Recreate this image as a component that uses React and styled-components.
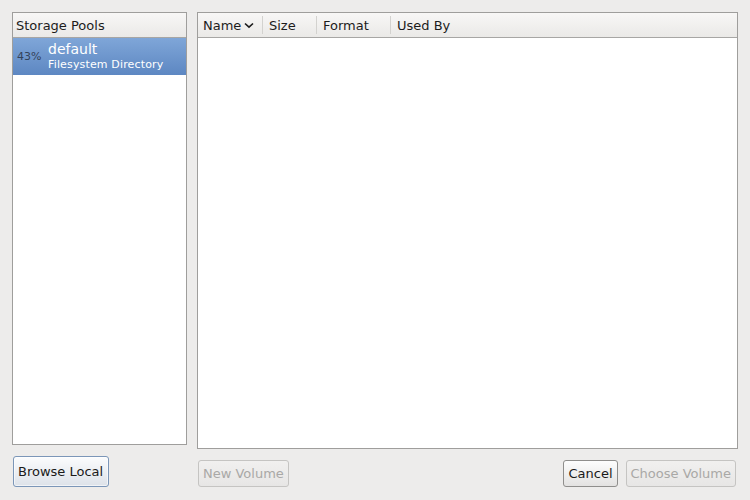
import React from "react";
import styled, { createGlobalStyle } from "styled-components";

const Global = createGlobalStyle`
  html, body { margin: 0; padding: 0; background: #edeceb; }
  body { font-family: "DejaVu Sans", "Liberation Sans", sans-serif; font-size: 13px; color: #1a1a1a; }
`;

const Window = styled.div`
  width: 750px;
  height: 500px;
  box-sizing: border-box;
  padding: 12px 12px 13px 12px;
  display: flex;
  gap: 10px;
  background: #edeceb;
`;

const Column = styled.div`
  display: flex;
  flex-direction: column;
  width: ${(p) => (p.$width ? p.$width + "px" : "auto")};
  flex: ${(p) => (p.$width ? "0 0 auto" : "1 1 auto")};
  min-width: 0;
`;

const Panel = styled.div`
  flex: 1 1 auto;
  background: #ffffff;
  border: 1px solid #9f9e9c;
  display: flex;
  flex-direction: column;
  min-height: 0;
`;

const Header = styled.div`
  height: 24px;
  border-bottom: 1px solid #a7a6a4;
  background: linear-gradient(#f8f7f6, #eae9e7);
  display: flex;
  align-items: center;
`;

const HeaderCell = styled.div`
  position: relative;
  width: ${(p) => (p.$width ? p.$width + "px" : "auto")};
  flex: ${(p) => (p.$width ? "0 0 auto" : "1 1 auto")};
  height: 100%;
  box-sizing: border-box;
  padding-left: ${(p) => p.$pad ?? 5}px;
  display: flex;
  align-items: center;
  gap: 3px;
  font-size: 13px;
  color: #1c1c1c;
  border-right: ${(p) => (p.$sep ? "1px solid transparent" : "none")};
  &::after {
    content: "";
    display: ${(p) => (p.$sep ? "block" : "none")};
    position: absolute;
    right: -1px;
    top: 3px;
    bottom: 3px;
    width: 1px;
    background: #d3d2cf;
  }
`;

const PoolRow = styled.div`
  height: 37px;
  display: flex;
  align-items: center;
  background: ${(p) => (p.$selected ? "linear-gradient(#7fa6d8, #5d87c2)" : "transparent")};
  color: ${(p) => (p.$selected ? "#ffffff" : "#1a1a1a")};
`;

const Percent = styled.div`
  width: 35px;
  box-sizing: border-box;
  padding-left: 4px;
  font-size: 11px;
  color: #34435a;
`;

const PoolText = styled.div`
  display: flex;
  flex-direction: column;
  line-height: 1;
`;

const PoolName = styled.div`
  font-size: 14px;
  margin-bottom: 3px;
  margin-top: -2px;
`;

const PoolType = styled.div`
  font-size: 11px;
  letter-spacing: 0.15px;
`;

const ButtonRow = styled.div`
  margin-top: 11px;
  display: flex;
  gap: 8px;
  padding: 0 2px 0 1px;
`;

const Spacer = styled.div`
  flex: 1;
`;

const Button = styled.button`
  font-family: "DejaVu Sans", "Liberation Sans", sans-serif;
  font-size: 13px;
  height: ${(p) => (p.$tall ? 31 : 27)}px;
  padding: 0 ${(p) => p.$padR ?? 4}px 0 4px;
  border-radius: 3px;
  box-sizing: border-box;
  cursor: default;
  color: ${(p) => (p.disabled ? "#a9a8a6" : "#1a1a1a")};
  border: 1px solid ${(p) => (p.$focus ? "#7b96b8" : p.disabled ? "#c5c4c2" : "#8f8e8c")};
  background: ${(p) =>
    p.disabled
      ? "linear-gradient(#f1f0ef, #e7e6e5)"
      : p.$focus
      ? "linear-gradient(#fbfcfd, #dde2e9)"
      : "linear-gradient(#fdfdfd, #e3e2e1)"};
  box-shadow: ${(p) => (p.$focus ? "inset 0 0 0 1px rgba(255,255,255,0.6)" : "none")};
`;

const Chevron = () => (
  <svg width="10" height="7" viewBox="0 0 10 7">
    <path d="M1 1.5 L5 5.2 L9 1.5" fill="none" stroke="#1c1c1c" strokeWidth="1.6" />
  </svg>
);

export default function App() {
  return (
    <>
      <Global />
      <Window>
        <Column $width={175}>
          <Panel>
            <Header>
              <HeaderCell $pad={3}>Storage Pools</HeaderCell>
            </Header>
            <PoolRow $selected>
              <Percent>43%</Percent>
              <PoolText>
                <PoolName>default</PoolName>
                <PoolType>Filesystem Directory</PoolType>
              </PoolText>
            </PoolRow>
          </Panel>
          <ButtonRow>
            <Button $tall $focus $padR={5}>Browse Local</Button>
          </ButtonRow>
        </Column>
        <Column>
          <Panel>
            <Header>
              <HeaderCell $width={65} $sep>
                Name <Chevron />
              </HeaderCell>
              <HeaderCell $width={54} $sep $pad={6}>Size</HeaderCell>
              <HeaderCell $width={74} $sep $pad={6}>Format</HeaderCell>
              <HeaderCell $pad={6}>Used By</HeaderCell>
            </Header>
          </Panel>
          <ButtonRow>
            <Button disabled>New Volume</Button>
            <Spacer />
            <Button>Cancel</Button>
            <Button disabled>Choose Volume</Button>
          </ButtonRow>
        </Column>
      </Window>
    </>
  );
}
